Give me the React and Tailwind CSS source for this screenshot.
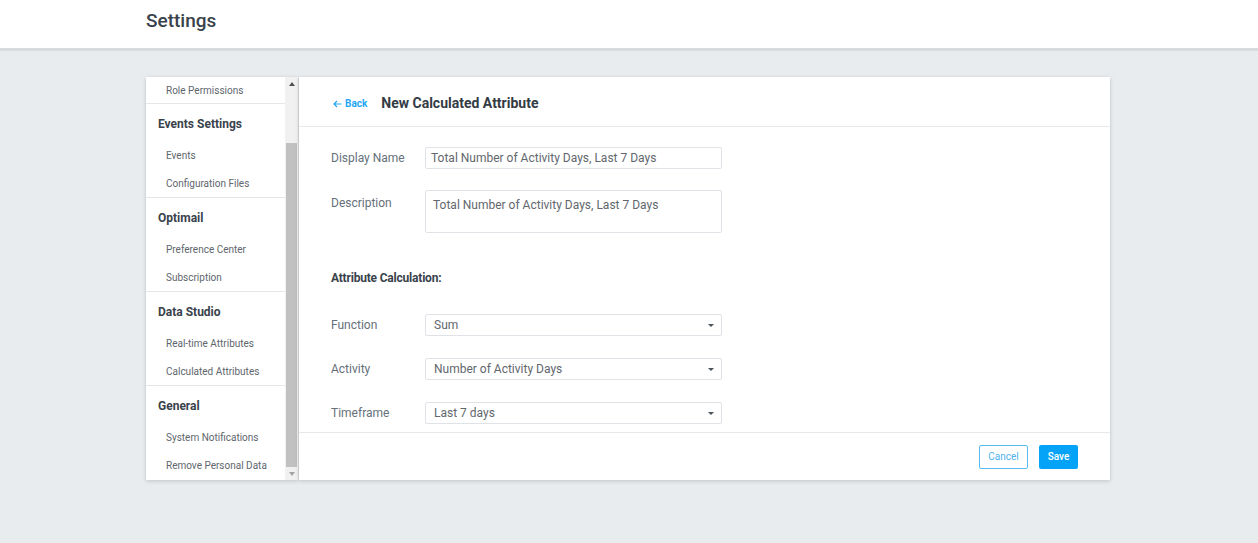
import React from 'react';

const sections = [
  { title: 'Events Settings', items: ['Events', 'Configuration Files'] },
  { title: 'Optimail', items: ['Preference Center', 'Subscription'] },
  { title: 'Data Studio', items: ['Real-time Attributes', 'Calculated Attributes'] },
  { title: 'General', items: ['System Notifications', 'Remove Personal Data'] },
];

function Caret() {
  return (
    <svg width="6" height="3" viewBox="0 0 6 3" className="text-[#4a535c]">
      <path d="M0 0h6L3 3z" fill="currentColor" />
    </svg>
  );
}

function Select({ value }) {
  return (
    <div className="w-[297px] h-[22px] border border-[#dfe3e7] rounded-[2px] flex items-center justify-between pl-[8px] pr-[7px] text-[12px] text-[#62676d]">
      <span>{value}</span>
      <Caret />
    </div>
  );
}

function Row({ label, children, top }) {
  return (
    <div className="flex">
      <div className={`w-[94px] text-[12px] text-[#66707a] ${top ? 'pt-[4px]' : 'flex items-center'}`}>{label}</div>
      {children}
    </div>
  );
}

export default function App() {
  return (
    <div className="min-h-screen bg-[#e9ecef] font-['Roboto',sans-serif]">
      <div className="h-[51px] bg-white border-b-[3px] border-[#d7dbde]">
        <div className="pl-[146px] pt-[7px] text-[19px] font-medium text-[#39424b]">Settings</div>
      </div>

      <div className="flex pl-[146px] pt-[26px]">
        {/* sidebar */}
        <div className="flex h-[403px] bg-white shadow-[0_1px_4px_rgba(0,0,0,0.18)]">
          <div className="w-[139px] overflow-hidden">
            <div className="h-[27px] flex items-center pl-[20px] pt-[1px] text-[10px] text-[#60666c] border-b border-[#e4e7ea]">
              Role Permissions
            </div>
            {sections.map((s, i) => (
              <div key={s.title} className={i < sections.length - 1 ? 'border-b border-[#e4e7ea]' : ''}>
                <div className="h-[37px] flex items-center pl-[12px] pt-[2px] text-[12px] font-bold text-[#39424b]">{s.title}</div>
                {s.items.map((it) => (
                  <div key={it} className="h-[28px] flex items-center pl-[20px] text-[10px] text-[#60666c]">{it}</div>
                ))}
              </div>
            ))}
          </div>
          {/* scrollbar */}
          <div className="w-[13px] bg-[#f1f1f1] flex flex-col items-center">
            <div className="h-[14px] flex items-center justify-center">
              <svg width="6" height="4" viewBox="0 0 6 4"><path d="M3 0l3 4H0z" fill="#505050" /></svg>
            </div>
            <div className="w-[11px] h-[324px] mt-[52px] bg-[#c1c1c1]"></div>
            <div className="h-[13px] flex items-center justify-center">
              <svg width="6" height="4" viewBox="0 0 6 4"><path d="M0 0h6L3 4z" fill="#a3a3a3" /></svg>
            </div>
          </div>
        </div>

        {/* main */}
        <div className="ml-[1px] w-[811px] h-[403px] bg-white shadow-[0_1px_4px_rgba(0,0,0,0.18)] flex flex-col">
          <div className="h-[50px] border-b border-[#e6e9ec] flex items-center pl-[34px] pt-[4px]">
            <span className="flex items-center text-[10px] font-bold text-[#27a6f2]">
              <svg width="9" height="8" viewBox="0 0 9 8" className="mr-[3px]">
                <path d="M8.5 4H1M4 1L1 4l3 3" fill="none" stroke="#27a6f2" strokeWidth="1.2" />
              </svg>
              Back
            </span>
            <span className="ml-[14px] text-[14px] font-bold text-[#333b44]">New Calculated Attribute</span>
          </div>

          <div className="h-[305px] pl-[32px] pt-[20px] pb-[8px]">
            <Row label="Display Name">
              <div className="w-[297px] h-[22px] border border-[#dfe3e7] rounded-[2px] flex items-center pl-[5px] text-[12px] text-[#62676d]">
                Total Number of Activity Days, Last 7 Days
              </div>
            </Row>
            <div className="mt-[21px]">
              <Row label="Description" top>
                <div className="w-[297px] h-[43px] border border-[#dfe3e7] rounded-[2px] pl-[7px] pt-[5px] text-[12px] text-[#62676d]">
                  Total Number of Activity Days, Last 7 Days
                </div>
              </Row>
            </div>
            <div className="mt-[36px] h-[16px] text-[12px] font-bold text-[#39424b] tracking-[-0.2px]">Attribute Calculation:</div>
            <div className="mt-[29px] flex flex-col gap-[22px]">
              <Row label="Function"><Select value="Sum" /></Row>
              <Row label="Activity"><Select value="Number of Activity Days" /></Row>
              <Row label="Timeframe"><Select value="Last 7 days" /></Row>
            </div>
          </div>

          <div className="flex-1 border-t border-[#e6e9ec] flex items-center justify-end pr-[32px] gap-[11px]">
            <button className="w-[49px] h-[24px] border border-[#5ab9f2] rounded-[2px] text-[10px] text-[#4fb3ef]">Cancel</button>
            <button className="w-[39px] h-[24px] bg-[#04a3f7] rounded-[2px] text-[10px] font-medium text-white">Save</button>
          </div>
        </div>
      </div>
    </div>
  );
}
